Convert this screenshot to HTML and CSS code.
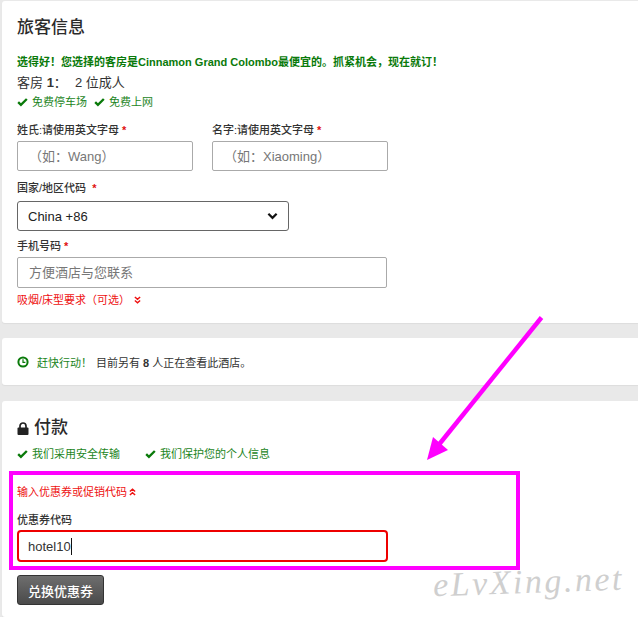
FILE: index.html
```html
<!DOCTYPE html>
<html lang="zh">
<head>
<meta charset="utf-8">
<title>旅客信息</title>
<link rel="stylesheet" href="styles.css">
</head>
<body>
<svg width="0" height="0" class="defs">
  <symbol id="check" viewBox="0 0 14 12"><path d="M1.5 6.2 L5 9.6 L12.5 2.2" fill="none" stroke="currentColor" stroke-width="3"/></symbol>
  <symbol id="chev" viewBox="0 0 8 9"><path d="M1 1 L4 3.6 L7 1 M1 5 L4 7.6 L7 5" fill="none" stroke="currentColor" stroke-width="1.7"/></symbol>
  <symbol id="chevup" viewBox="0 0 8 9"><path d="M1 4 L4 1.4 L7 4 M1 8 L4 5.4 L7 8" fill="none" stroke="currentColor" stroke-width="1.7"/></symbol>
</svg>
<main class="page">
  <section class="card card-guest">
    <h2 class="title">旅客信息</h2>
    <p class="notice">选得好！您选择的客房是Cinnamon Grand Colombo最便宜的。抓紧机会，现在就订！</p>
    <p class="room"><span class="room-name">客房 <b>1</b>：</span><span>2 位成人</span></p>
    <ul class="perks">
      <li><svg class="check"><use href="#check"/></svg>免费停车场</li>
      <li><svg class="check"><use href="#check"/></svg>免费上网</li>
    </ul>
    <div class="name-row">
      <div class="field">
        <label class="label">姓氏:请使用英文字母<span class="req"> *</span></label>
        <input class="input" placeholder="（如：Wang）">
      </div>
      <div class="field">
        <label class="label">名字:请使用英文字母<span class="req"> *</span></label>
        <input class="input" placeholder="（如：Xiaoming）">
      </div>
    </div>
    <label class="label label-country">国家/地区代码<span class="req">&nbsp; *</span></label>
    <div class="select">
      <span>China +86</span>
      <svg class="select-arrow" viewBox="0 0 12 8"><path d="M1.5 1.5 L6 6 L10.5 1.5" fill="none" stroke="currentColor" stroke-width="2.4"/></svg>
    </div>
    <label class="label label-phone">手机号码<span class="req"> *</span></label>
    <input class="input input-phone" placeholder="方便酒店与您联系">
    <a class="link link-pref">吸烟/床型要求（可选）<svg class="chev"><use href="#chev"/></svg></a>
  </section>

  <section class="card card-urgent">
    <svg class="clock" viewBox="0 0 12 12"><circle cx="6" cy="6" r="4.6" fill="none" stroke="currentColor" stroke-width="2"/><path d="M6 3.2 V6.3 H8.4" fill="none" stroke="currentColor" stroke-width="1.2"/></svg>
    <span class="hurry">赶快行动！</span>
    <span>目前另有 <b>8</b> 人正在查看此酒店。</span>
  </section>

  <section class="card card-pay">
    <h2 class="title title-pay">
      <svg class="lock" viewBox="0 0 12 13"><path d="M3 6 V4 a3 3 0 0 1 6 0 V6" fill="none" stroke="currentColor" stroke-width="1.7"/><rect x="0.5" y="5.5" width="11" height="7.5" rx="1" fill="currentColor"/></svg>
      付款
    </h2>
    <ul class="perks perks-pay">
      <li><svg class="check"><use href="#check"/></svg>我们采用安全传输</li>
      <li><svg class="check"><use href="#check"/></svg>我们保护您的个人信息</li>
    </ul>
    <a class="link link-coupon">输入优惠券或促销代码<svg class="chev"><use href="#chevup"/></svg></a>
    <label class="label label-coupon">优惠券代码</label>
    <div class="coupon-input"><span>hotel10</span><i class="caret"></i></div>
    <button class="btn" type="button">兑换优惠券</button>
  </section>
</main>

<div class="mark-box"></div>
<svg class="arrow" width="638" height="617" viewBox="0 0 638 617">
  <path d="M541.5 317.5 L437 447" stroke="#ff00ff" stroke-width="4.5" fill="none"/>
  <path d="M427 460 L433 437 L448 450 Z" fill="#ff00ff"/>
</svg>
<div class="watermark">eLvXing.net</div>
</body>
</html>
```

FILE: styles.css
```css
* { box-sizing: border-box; }
html, body { margin: 0; padding: 0; }
body {
  width: 638px;
  height: 617px;
  overflow: hidden;
  position: relative;
  background: #e9e9e9;
  color: #333;
  font-family: "Liberation Sans", "Noto Sans CJK SC", sans-serif;
  font-size: 11px;
}
.defs { position: absolute; }
.page { padding: 1px 0 0 2px; }
.card {
  background: #fff;
  border-radius: 3px 0 0 3px;
  box-shadow: 0 1px 1px #ddd;
  padding-left: 15px;
}
.card-guest { height: 322px; padding-top: 17px; }
.title { margin: 0; font-size: 17px; line-height: 20px; font-weight: 500; color: #2b2b2b; }
.notice { margin: 16px 0 0; font-size: 11px; line-height: 16px; font-weight: 700; color: #0a7a0a; }
.room { margin: 5px 0 0; font-size: 13px; line-height: 16px; display: flex; }
.room-name { width: 58px; }
.room b { font-weight: 700; }
.perks { list-style: none; margin: 3px 0 0; padding: 0; display: flex; gap: 7px; font-size: 11px; line-height: 16px; color: #1c851c; }
.perks li { display: flex; align-items: center; }
.check { width: 11px; height: 10px; margin-right: 4px; color: #0a7a0a; }
.name-row { display: flex; gap: 19px; margin-top: 12px; }
.field { width: 176px; display: flex; flex-direction: column; }
.label { display: block; font-size: 11px; line-height: 16px; font-weight: 500; color: #333; }
.req { color: #e01010; font-weight: 700; }
.input {
  display: block;
  width: 176px;
  height: 30px;
  margin: 3px 0 0;
  padding: 0 11px;
  border: 1px solid #aaa;
  border-radius: 2px;
  background: #fff;
  font: 13px "Liberation Sans", "Noto Sans CJK SC", sans-serif;
  outline: none;
}
.input::placeholder { color: #777; opacity: 1; }
.label-country { margin-top: 9px; }
.select {
  width: 272px;
  height: 30px;
  margin-top: 5px;
  padding: 0 10px;
  border: 1px solid #666;
  border-radius: 3px;
  display: flex;
  align-items: center;
  justify-content: space-between;
  font-size: 13px;
  color: #222;
}
.select-arrow { width: 11px; height: 8px; margin-right: 0; color: #111; }
.label-phone { margin-top: 7px; }
.input-phone { width: 370px; height: 31px; margin-top: 3px; }
.link { display: flex; align-items: center; color: #ee1111; font-size: 11px; line-height: 16px; }
.link-pref { margin-top: 4px; }
.chev { width: 7px; height: 8px; margin-left: 4px; }
.card-urgent {
  height: 47px;
  margin-top: 15px;
  display: flex;
  align-items: center;
  font-size: 11px;
}
.clock { width: 12px; height: 12px; color: #0a7a0a; margin-right: 8px; }
.hurry { color: #1c851c; width: 59px; }
.card-urgent b { font-weight: 700; }
.card-pay { height: 216px; margin-top: 16px; padding-top: 17px; }
.title-pay { display: flex; align-items: center; }
.lock { width: 12px; height: 13px; margin-right: 5px; color: #222; }
.perks-pay { margin-top: 8px; gap: 25px; }
.link-coupon { margin-top: 22px; }
.link-coupon .chev { margin-left: 2px; }
.label-coupon { margin-top: 12px; }
.coupon-input {
  width: 371px;
  height: 32px;
  margin-top: 2px;
  padding: 0 9px;
  border: 2px solid #ee0000;
  border-radius: 4px;
  display: flex;
  align-items: center;
  font-size: 13px;
  color: #333;
}
.caret { width: 1px; height: 17px; background: #111; }
.btn {
  display: block;
  width: 87px;
  height: 30px;
  margin-top: 13px;
  padding: 0;
  border: 1px solid #333;
  border-radius: 3px;
  background: linear-gradient(#6e6e6e, #4a4a4a);
  color: #fff;
  font: 500 13px "Liberation Sans", "Noto Sans CJK SC", sans-serif;
}
.mark-box {
  position: absolute;
  left: 9px;
  top: 471px;
  width: 511px;
  height: 99px;
  border: 4px solid #ff00ff;
}
.arrow { position: absolute; left: 0; top: 0; }
.watermark {
  position: absolute;
  left: 433px;
  top: 564px;
  font-family: "Liberation Serif", serif;
  font-style: italic;
  font-size: 34px;
  line-height: 36px;
  letter-spacing: 2.5px;
  color: #cfcfcf;
  transform: rotate(-2deg);
}
```
